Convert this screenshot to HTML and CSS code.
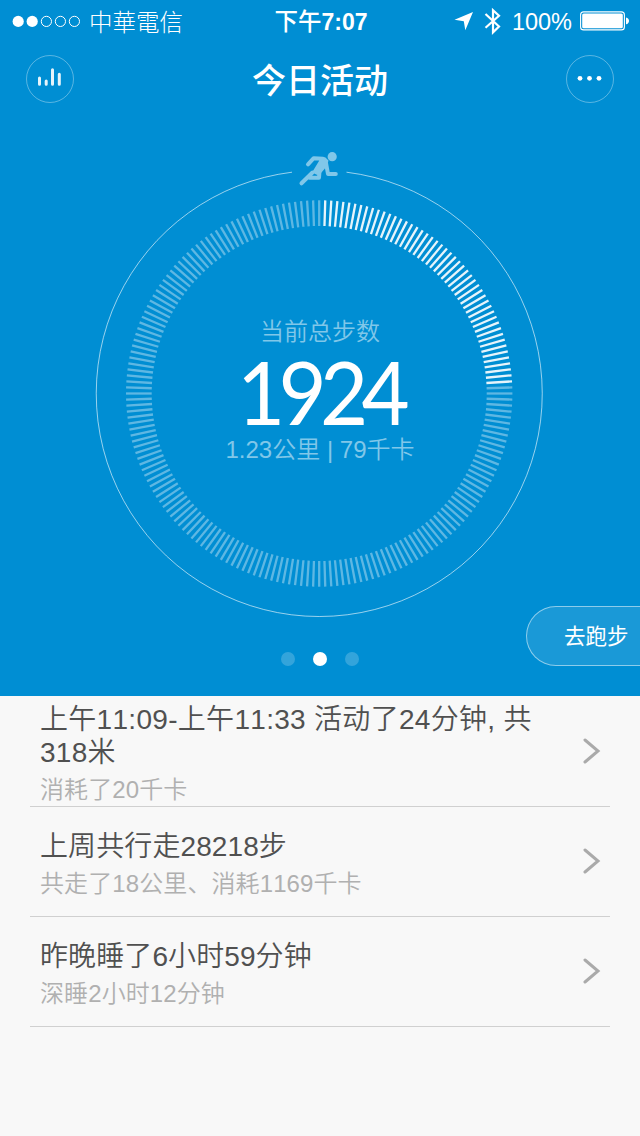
FILE: index.html
```html
<!DOCTYPE html>
<html lang="zh-CN">
<head>
  <meta charset="UTF-8">
  <title>今日活动</title>
  <link rel="stylesheet" href="styles.css">
</head>
<body>

  <div class="hero">
    <div class="status">
      <div class="carrier">
        <svg width="70" height="14" viewBox="0 0 70 14">
          <g fill="#fff">
            <circle cx="6.2" cy="7.4" r="5.6"/>
            <circle cx="20.2" cy="7.4" r="5.6"/>
          </g>
          <g fill="none" stroke="#fff">
            <circle cx="34.4" cy="7.4" r="5.1"/>
            <circle cx="48.4" cy="7.4" r="5.1"/>
            <circle cx="62.4" cy="7.4" r="5.1"/>
          </g>
        </svg>
        <span>中華電信</span>
      </div>
      <div class="clock">下午<b>7:07</b></div>
      <div class="power">
        <svg class="locate" width="20" height="20" viewBox="0 0 20 20"><path d="M19 1 L0.5 8.8 L9.8 10.2 L11.3 19.2 Z" fill="#fff"/></svg>
        <svg class="bluetooth" width="18" height="28" viewBox="0 0 18 28"><path d="M1.5 7 L15 19.5 L9 25.3 V3.3 L15 8.8 L1.5 20.8" fill="none" stroke="#fff" stroke-width="2.2"/></svg>
        <span>100%</span>
        <svg class="battery" width="50" height="20" viewBox="0 0 50 20">
          <rect x="0.6" y="0.9" width="43.8" height="18" rx="3" fill="none" stroke="#fff" stroke-width="1.1"/>
          <rect x="2.2" y="2.5" width="40.6" height="14.8" rx="1.5" fill="#fff"/>
          <path d="M46 6.5 C50 6.9 50 12.9 46 13.3 Z" fill="#fff"/>
        </svg>
      </div>
    </div>

    <div class="nav">
      <button class="round">
        <svg width="48" height="48" viewBox="0 0 48 48" stroke="#fff" stroke-opacity=".9" stroke-width="3" stroke-linecap="round">
          <path d="M13.5 23 V29.3 M20.2 26 V29.3 M26.5 14.7 V29.3 M33.3 19.3 V29.3"/>
        </svg>
      </button>
      <h1>今日活动</h1>
      <button class="round">
        <svg width="48" height="48" viewBox="0 0 48 48" fill="#fff">
          <circle cx="14" cy="23.3" r="2.4"/>
          <circle cx="23.5" cy="23.3" r="2.4"/>
          <circle cx="33" cy="23.3" r="2.4"/>
        </svg>
      </button>
    </div>

    <div class="dial">
      <svg class="ring" width="640" height="522" viewBox="0 118 640 522">
        <path d="M346.5 172.2 A223 223 0 1 1 292 172.2" fill="none" stroke="#fff" stroke-opacity=".6"/>
        <g id="ticks"></g>
        <g class="runner">
          <circle cx="332.2" cy="156.7" r="4.6"/>
          <path class="limb" d="M308 164.3 L313.7 158.2 L323 158.8"/>
          <path class="limb" d="M326 163 L328 174 L335.8 174"/>
          <path class="limb" d="M301.5 183.3 L312.5 172.5 M309.5 177.7 L319 177.7 L319.5 171"/>
          <path d="M320 157 L325.5 157.5 L328.5 160.5 L327 166 L321.5 172.5 L317.3 175 L312 172.5 L319 161 Z"/>
        </g>
      </svg>
      <div class="numbers">
        <p class="label">当前总步数</p>
        <p class="steps">1924</p>
        <p class="label">1.23公里 | 79千卡</p>
      </div>
    </div>

    <div class="pager">
      <i></i><i class="on"></i><i></i>
    </div>
    <button class="run">去跑步</button>
  </div>

  <div class="list">
    <div class="row">
      <div>
        <h2 class="wide">上午11:09-上午11:33 活动了24分钟, 共318米</h2>
        <p>消耗了20千卡</p>
      </div>
      <svg class="arrow" width="18" height="26" viewBox="0 0 18 26"><path d="M2 2 L15 13 L2 24"/></svg>
    </div>
    <div class="row">
      <div>
        <h2>上周共行走28218步</h2>
        <p>共走了18公里、消耗1169千卡</p>
      </div>
      <svg class="arrow" width="18" height="26" viewBox="0 0 18 26"><path d="M2 2 L15 13 L2 24"/></svg>
    </div>
    <div class="row">
      <div>
        <h2>昨晚睡了6小时59分钟</h2>
        <p>深睡2小时12分钟</p>
      </div>
      <svg class="arrow" width="18" height="26" viewBox="0 0 18 26"><path d="M2 2 L15 13 L2 24"/></svg>
    </div>
  </div>

  <script src="script.js"></script>
</body>
</html>
```

FILE: styles.css
```css
* { box-sizing: border-box; }
body {
  margin: 0; width: 640px; height: 1136px; overflow: hidden;
  font-family: "Liberation Sans", "Noto Sans CJK SC", sans-serif;
  font-weight: 350; font-kerning: none;
  background: #f8f8f8; color: #505050;
}
h1, h2, p { margin: 0; font-weight: 350; }
svg { display: block; flex: none; }
button { padding: 0; font: inherit; color: #fff; }

.hero {
  position: relative; height: 696px; overflow: hidden;
  background: #008ed3; color: #fff;
}

/* status bar */
.status {
  display: grid; grid-template-columns: 1fr auto 1fr; align-items: center;
  height: 40px; padding: 0 10px 0 12px; font-size: 23.5px; line-height: 40px;
}
.carrier, .power { display: flex; align-items: center; }
.carrier { gap: 7px; font-family: "Noto Sans CJK TC", sans-serif; font-weight: 300; }
.clock { padding-top: 1px; font-weight: 500; }
.clock b { font-size: 23px; }
.power { justify-content: flex-end; }
.power span { padding-top: 2px; }
.locate { margin-right: 10px; }
.bluetooth { margin-right: 10px; }
.battery { margin-left: 8px; }

.nav {
  display: flex; justify-content: space-between; align-items: center;
  height: 78px; padding: 0 26px;
}
.nav h1 { padding-top: 3px; font-size: 34px; font-weight: 500; line-height: 40px; }
.round {
  width: 48px; height: 48px; border: 1px solid rgba(255, 255, 255, .35);
  border-radius: 50%; background: none;
}
.round svg { margin: -1px; }

/* dial */
.dial { display: grid; height: 522px; }
.ring, .numbers { grid-area: 1 / 1; }
#ticks line { stroke: #fff; stroke-width: 2.3; stroke-opacity: .37; }
#ticks .done { stroke-opacity: .9; }
.runner { fill: #80c7e9; }
.runner .limb {
  fill: none; stroke: #80c7e9; stroke-width: 4;
  stroke-linecap: round; stroke-linejoin: round;
}
.numbers { padding-top: 197px; text-align: center; }
.label { font-size: 24px; line-height: 34px; color: #80c7e9; }
.steps {
  height: 84px; font-family: Lato, sans-serif; font-weight: 400;
  font-size: 87px; line-height: 86px; letter-spacing: -7px;
  transform: scaleX(.955);
}

.pager { display: flex; justify-content: center; gap: 18px; padding-top: 12px; }
.pager i { width: 14px; height: 14px; border-radius: 50%; background: rgba(255, 255, 255, .2); }
.pager .on { background: #fff; }

.run {
  position: absolute; top: 606px; right: -30px; width: 144px; height: 60px;
  padding: 0 0 3px 37px; text-align: left; font-size: 21.5px; font-weight: 400;
  border: 1px solid rgba(255, 255, 255, .5); border-radius: 30px;
  background: rgba(255, 255, 255, .1);
}

/* list */
.list { padding: 1px 30px 0; }
.row {
  display: flex; justify-content: space-between; align-items: center;
  height: 110px; padding: 4px 9px 0 10px; border-bottom: 1px solid #d0d0d0;
}
.row h2 { width: 510px; font-size: 28px; line-height: 33px; letter-spacing: .1px; }
.row .wide { letter-spacing: .3px; }
.row p { margin-top: 7px; font-size: 24px; line-height: 28px; letter-spacing: .1px; color: #b0b0b0; }
.arrow { margin-top: -6px; }
.arrow path { fill: none; stroke: #aaa; stroke-width: 3; stroke-linecap: round; }
```

FILE: script.js
```js
const ticks = document.getElementById("ticks");
const total = 200;
const done = 48;

for (let i = 0; i < total; i++) {
  const line = document.createElementNS("http://www.w3.org/2000/svg", "line");
  line.setAttribute("x1", 319.2);
  line.setAttribute("x2", 319.2);
  line.setAttribute("y1", 200.3);
  line.setAttribute("y2", 226);
  line.setAttribute("transform", `rotate(${i * 360 / total} 319.2 393.5)`);
  if (i > 0 && i <= done) line.setAttribute("class", "done");
  ticks.appendChild(line);
}
```
